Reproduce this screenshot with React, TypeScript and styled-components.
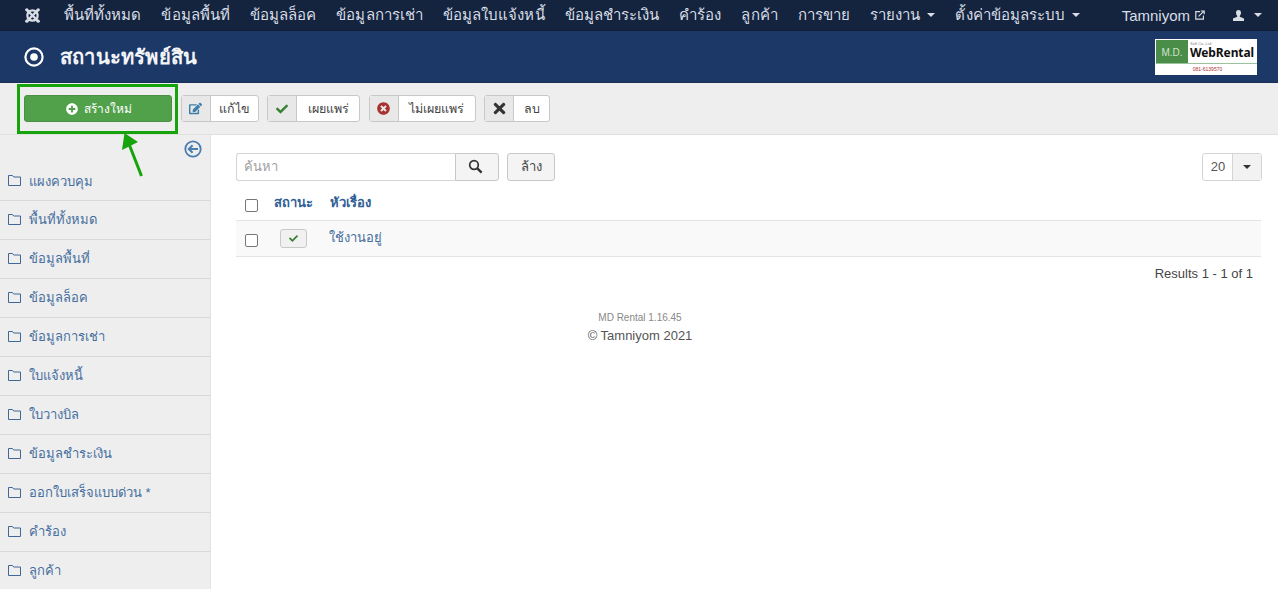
import React from "react";
import styled, { createGlobalStyle } from "styled-components";
import { FaCheck, FaEdit, FaPlusCircle, FaTimes, FaTimesCircle } from "react-icons/fa";

const GlobalStyle = createGlobalStyle`
  html, body {
    margin: 0;
    padding: 0;
    background: #fff;
    font-family: "Liberation Sans", "Noto Sans", sans-serif;
    font-size: 13px;
    color: #333;
    overflow: hidden;
  }
`;

const Page = styled.div`
  position: relative;
  width: 1278px;
  height: 589px;
  overflow: hidden;
`;

const TopNav = styled.nav`
  height: 30px;
  background: #14243f;
  border-bottom: 1px solid #0f1c33;
  display: flex;
  align-items: center;
  padding: 0 16px 0 24px;
`;

const Brand = styled.div`
  width: 40px;
  display: flex;
  color: #d9dde4;
`;

const NavItems = styled.div`
  display: flex;
  gap: 20px;
`;

const NavItem = styled.a`
  display: inline-flex;
  align-items: center;
  gap: 7px;
  color: #d9dde4;
  font-size: 15px;
  letter-spacing: 0.06px;
  white-space: nowrap;
`;

const Caret = styled.span`
  width: 0;
  height: 0;
  border-left: 4px solid transparent;
  border-right: 4px solid transparent;
  border-top: 4px solid currentColor;
`;

const NavRight = styled.div`
  margin-left: auto;
  display: flex;
  align-items: center;
  gap: 28px;
`;

const UserLink = styled(NavItem)`
  gap: 5px;
  letter-spacing: 0;
`;

const UserMenu = styled(NavItem)`
  gap: 10px;
`;

const SubHead = styled.header`
  height: 51px;
  background: #1c3867;
  border-bottom: 1px solid #183058;
  display: flex;
  align-items: center;
  justify-content: space-between;
  padding: 0 21px 0 24px;
`;

const PageTitle = styled.h1`
  display: flex;
  align-items: center;
  gap: 16px;
  margin: 0;
  color: #f2f4f7;
  font-size: 20.2px;
  letter-spacing: 0.2px;
  font-weight: 700;
`;

const Logo = styled.div`
  width: 102px;
  height: 36px;
  box-sizing: border-box;
  padding: 1px 0 0 1px;
  background: #fff;
  display: flex;
  flex-direction: column;
`;

const LogoTop = styled.div`
  height: 23px;
  display: flex;
  border-bottom: 1px solid #9ac29d;
`;

const LogoMark = styled.div`
  width: 32px;
  box-sizing: border-box;
  padding-top: 2px;
  background: #4a8d48;
  color: #cfe3cf;
  font-size: 10px;
  display: flex;
  align-items: center;
  justify-content: center;
`;

const LogoText = styled.div`
  flex: 1;
  display: flex;
  flex-direction: column;
  padding-left: 2px;
`;

const LogoCompany = styled.div`
  color: #888;
  font-size: 4px;
  line-height: 5px;
  margin-top: 1px;
`;

const LogoName = styled.div`
  color: #111;
  font-family: "Noto Sans", sans-serif;
  font-weight: 700;
  font-size: 12px;
  line-height: 13px;
  letter-spacing: -0.1px;
`;

const LogoPhone = styled.div`
  flex: 1;
  color: #a33;
  font-size: 5px;
  display: flex;
  align-items: center;
  justify-content: center;
  padding-left: 2px;
`;

const Toolbar = styled.div`
  height: 52px;
  box-sizing: border-box;
  background: #eeeeee;
  border-bottom: 1px solid #e0e0e0;
  display: flex;
  align-items: center;
  gap: 8.5px;
  padding: 0 0 0 24px;
`;

const NewButton = styled.button`
  width: 148px;
  height: 27px;
  background: #51a04a;
  border: 1px solid #4a8f44;
  border-radius: 3px;
  color: #fff;
  font: inherit;
  font-size: 12px;
  display: flex;
  align-items: center;
  justify-content: center;
  gap: 6px;
  padding: 0 0 0 2px;
`;

const ToolButton = styled.button`
  height: 27px;
  padding: 0;
  background: #fff;
  border: 1px solid #c8c8c8;
  border-radius: 3px;
  color: #444;
  font: inherit;
  font-size: 12.5px;
  display: flex;
  align-items: stretch;
`;

const ToolIcon = styled.span<{ $color: string }>`
  width: 28px;
  background: #e8e8e8;
  border-right: 1px solid #c8c8c8;
  color: ${(p) => p.$color};
  display: flex;
  align-items: center;
  justify-content: center;
`;

const ToolLabel = styled.span<{ $pad: number }>`
  padding: 0 ${(p) => p.$pad}px;
  display: flex;
  align-items: center;
`;

const Highlight = styled.div`
  position: absolute;
  left: 17px;
  top: 84px;
  width: 161px;
  height: 50px;
  box-sizing: border-box;
  border: 3px solid #16a30c;
  pointer-events: none;
`;

const Arrow = styled.svg`
  position: absolute;
  left: 118px;
  top: 130px;
`;

const Body = styled.div`
  display: flex;
  height: 454px;
`;

const Sidebar = styled.aside`
  width: 211px;
  box-sizing: border-box;
  flex: none;
  background: #eeeeee;
  border-right: 1px solid #e3e3e3;
  display: flex;
  flex-direction: column;
  overflow: hidden;
`;

const ToggleRow = styled.div`
  height: 28px;
  flex: none;
  box-sizing: border-box;
  padding: 5px 8px 0 0;
  display: flex;
  justify-content: flex-end;
  color: #4a7db0;
`;

const SideItem = styled.a`
  height: 39px;
  flex: none;
  box-sizing: border-box;
  border-bottom: 1px solid #d8d8d8;
  display: flex;
  align-items: center;
  gap: 8px;
  padding: 0 0 1px 8px;
  color: #466e9e;
  font-size: 13px;
  &:first-of-type {
    height: 38px;
  }
`;

const FolderIcon = styled.svg`
  flex: none;
  margin-top: -2px;
  color: #3f6797;
`;

const Main = styled.main`
  flex: 1;
  padding: 18px 16px 0 25px;
  min-width: 0;
`;

const Filters = styled.div`
  display: flex;
  align-items: center;
  height: 28px;
`;

const SearchInput = styled.div`
  width: 219px;
  height: 28px;
  box-sizing: border-box;
  border: 1px solid #d4d4d4;
  border-right: 0;
  border-radius: 3px 0 0 3px;
  color: #a0a0a0;
  padding: 0 7px 2px;
  display: flex;
  align-items: center;
`;

const SearchButton = styled.button`
  width: 44px;
  height: 28px;
  padding: 0 3px 2px 0;
  background: #f4f4f4;
  border: 1px solid #c8c8c8;
  border-radius: 0 3px 3px 0;
  color: #333;
  display: flex;
  align-items: center;
  justify-content: center;
`;

const ClearButton = styled.button`
  width: 48px;
  height: 28px;
  margin-left: 8px;
  padding: 0 0 2px;
  background: #f4f4f4;
  border: 1px solid #c8c8c8;
  border-radius: 3px;
  color: #444;
  font: inherit;
`;

const LimitSelect = styled.div`
  margin-left: auto;
  width: 60px;
  height: 28px;
  box-sizing: border-box;
  border: 1px solid #d4d4d4;
  border-radius: 3px;
  display: flex;
  color: #555;
`;

const LimitValue = styled.span`
  flex: 1;
  padding: 0 0 2px 1px;
  display: flex;
  align-items: center;
  justify-content: center;
`;

const LimitCaret = styled.span`
  width: 28px;
  background: #f2f2f2;
  border-left: 1px solid #d4d4d4;
  color: #333;
  display: flex;
  align-items: center;
  justify-content: center;
`;

const Table = styled.div`
  margin: 4px 1px 0 0;
`;

const Row = styled.div<{ $head?: boolean }>`
  display: grid;
  grid-template-columns: 38px 56px 1fr;
  align-items: center;
  height: 36px;
  box-sizing: border-box;
  border-bottom: 1px solid #e4e4e4;
  background: ${(p) => (p.$head ? "#fff" : "#f9f9f9")};
  color: #466e9e;
`;

const Check = styled.input.attrs({ type: "checkbox" })<{ $offset: number }>`
  appearance: none;
  box-sizing: border-box;
  margin: ${(p) => p.$offset}px 0 0 9px;
  width: 13px;
  height: 13px;
  background: #fff;
  border: 1px solid #777;
  border-radius: 2px;
`;

const HeadLabel = styled.span`
  font-weight: 700;
  color: #2f6196;
`;

const RowTitle = styled.span`
  margin-left: -1px;
  padding-bottom: 2px;
`;

const StatusButton = styled.span`
  width: 27px;
  height: 19px;
  box-sizing: border-box;
  margin-left: 6px;
  background: #f1f1f1;
  border: 1px solid #c8c8c8;
  border-radius: 3px;
  color: #378137;
  display: flex;
  align-items: center;
  justify-content: center;
`;

const Results = styled.div`
  text-align: right;
  margin: 9px 9px 0 0;
  color: #444;
`;

const Footer = styled.footer`
  margin-top: 31px;
  width: 808px;
  text-align: center;
  color: #555;
`;

const Version = styled.div`
  font-size: 10px;
  color: #888;
  margin-bottom: 5px;
`;

const JoomlaMark = () => (
  <svg width="17" height="17" viewBox="0 0 18 18" fill="none" stroke="currentColor" strokeWidth="2.4">
    <path d="M3 3 L15 15 M15 3 L3 15 M5 5 Q9 2 13 5 M5 13 Q9 16 13 13 M5 5 Q2 9 5 13 M13 5 Q16 9 13 13" />
    <circle cx="3" cy="3" r="1.8" fill="currentColor" stroke="none" />
    <circle cx="15" cy="3" r="1.8" fill="currentColor" stroke="none" />
    <circle cx="3" cy="15" r="1.8" fill="currentColor" stroke="none" />
    <circle cx="15" cy="15" r="1.8" fill="currentColor" stroke="none" />
  </svg>
);

const TitleIcon = () => (
  <svg width="20" height="20" viewBox="0 0 20 20">
    <circle cx="10" cy="10" r="8.6" fill="none" stroke="#fff" strokeWidth="2.2" />
    <circle cx="10" cy="10" r="3.8" fill="#fff" />
  </svg>
);

const OutIcon = () => (
  <svg width="10" height="10" viewBox="0 0 10 10" fill="none" stroke="currentColor" strokeWidth="1.2">
    <path d="M5 1.6 H0.8 V9.2 H8.4 V5.4" />
    <path d="M3.6 6.4 L8.6 1.4 M5.8 1 H9.2 V4.2" />
  </svg>
);

const UserIcon = () => (
  <svg width="11" height="11" viewBox="0 0 11 11" fill="currentColor">
    <path d="M5.5 0 C7.2 0 8 1.2 8 2.8 C8 4.2 7.4 5.2 6.8 5.8 V6.8 L11 8.6 V11 H0 V8.6 L4.2 6.8 V5.8 C3.6 5.2 3 4.2 3 2.8 C3 1.2 3.8 0 5.5 0 Z" />
  </svg>
);

const SearchGlyph = () => (
  <svg width="15" height="15" viewBox="0 0 15 15" fill="none" stroke="currentColor">
    <circle cx="6" cy="6" r="4.3" strokeWidth="1.7" />
    <path d="M9.3 9.3 L13.6 13.6" strokeWidth="2.4" />
  </svg>
);

const BackIcon = () => (
  <svg width="18" height="18" viewBox="0 0 18 18" fill="none" stroke="currentColor">
    <circle cx="9" cy="9" r="7.7" strokeWidth="1.8" />
    <path d="M14 9 H5.5 M8.6 5.2 L4.8 9 L8.6 12.8" strokeWidth="2" />
  </svg>
);

const Folder = () => (
  <FolderIcon width="13" height="12" viewBox="0 0 13 12" fill="none" stroke="currentColor" strokeWidth="1">
    <path d="M0.5 1.5 H4.5 L5.7 3 H12.5 V11.5 H0.5 Z" />
  </FolderIcon>
);

const navItems = [
  "พื้นที่ทั้งหมด",
  "ข้อมูลพื้นที่",
  "ข้อมูลล็อค",
  "ข้อมูลการเช่า",
  "ข้อมูลใบแจ้งหนี้",
  "ข้อมูลชำระเงิน",
  "คำร้อง",
  "ลูกค้า",
  "การขาย",
];

const sideItems = [
  "แผงควบคุม",
  "พื้นที่ทั้งหมด",
  "ข้อมูลพื้นที่",
  "ข้อมูลล็อค",
  "ข้อมูลการเช่า",
  "ใบแจ้งหนี้",
  "ใบวางบิล",
  "ข้อมูลชำระเงิน",
  "ออกใบเสร็จแบบด่วน *",
  "คำร้อง",
  "ลูกค้า",
];

export default function App() {
  return (
    <Page>
      <GlobalStyle />
      <TopNav>
        <Brand>
          <JoomlaMark />
        </Brand>
        <NavItems>
          {navItems.map((item) => (
            <NavItem key={item}>{item}</NavItem>
          ))}
          <NavItem>
            รายงาน <Caret />
          </NavItem>
          <NavItem>
            ตั้งค่าข้อมูลระบบ <Caret />
          </NavItem>
        </NavItems>
        <NavRight>
          <UserLink>
            Tamniyom <OutIcon />
          </UserLink>
          <UserMenu>
            <UserIcon /> <Caret />
          </UserMenu>
        </NavRight>
      </TopNav>
      <SubHead>
        <PageTitle>
          <TitleIcon />
          สถานะทรัพย์สิน
        </PageTitle>
        <Logo>
          <LogoTop>
            <LogoMark>M.D.</LogoMark>
            <LogoText>
              <LogoCompany>Soft Co.,Ltd.</LogoCompany>
              <LogoName>WebRental</LogoName>
            </LogoText>
          </LogoTop>
          <LogoPhone>081-6139570</LogoPhone>
        </Logo>
      </SubHead>
      <Toolbar>
        <NewButton>
          <FaPlusCircle size={12} />
          สร้างใหม่
        </NewButton>
        <ToolButton>
          <ToolIcon $color="#3d7fa8"><FaEdit size={13} /></ToolIcon>
          <ToolLabel $pad={8}>แก้ไข</ToolLabel>
        </ToolButton>
        <ToolButton>
          <ToolIcon $color="#378137"><FaCheck size={12} /></ToolIcon>
          <ToolLabel $pad={10.5}>เผยแพร่</ToolLabel>
        </ToolButton>
        <ToolButton>
          <ToolIcon $color="#a83232"><FaTimesCircle size={13} /></ToolIcon>
          <ToolLabel $pad={10.5}>ไม่เผยแพร่</ToolLabel>
        </ToolButton>
        <ToolButton>
          <ToolIcon $color="#333"><FaTimes size={17} /></ToolIcon>
          <ToolLabel $pad={9.5}>ลบ</ToolLabel>
        </ToolButton>
      </Toolbar>
      <Highlight />
      <Arrow width="28" height="50" viewBox="0 0 28 50">
        <path d="M6.5 3 L20 12 L4 20 Z" fill="#16a30c" />
        <path d="M11 14 L23.5 46" stroke="#16a30c" strokeWidth="3" />
      </Arrow>
      <Body>
        <Sidebar>
          <ToggleRow>
            <BackIcon />
          </ToggleRow>
          {sideItems.map((item) => (
            <SideItem key={item}>
              <Folder />
              {item}
            </SideItem>
          ))}
        </Sidebar>
        <Main>
          <Filters>
            <SearchInput>ค้นหา</SearchInput>
            <SearchButton><SearchGlyph /></SearchButton>
            <ClearButton>ล้าง</ClearButton>
            <LimitSelect>
              <LimitValue>20</LimitValue>
              <LimitCaret><Caret /></LimitCaret>
            </LimitSelect>
          </Filters>
          <Table>
            <Row $head>
              <Check $offset={6} />
              <HeadLabel>สถานะ</HeadLabel>
              <HeadLabel>หัวเรื่อง</HeadLabel>
            </Row>
            <Row>
              <Check $offset={4} />
              <StatusButton><FaCheck size={9} /></StatusButton>
              <RowTitle>ใช้งานอยู่</RowTitle>
            </Row>
          </Table>
          <Results>Results 1 - 1 of 1</Results>
          <Footer>
            <Version>MD Rental 1.16.45</Version>
            <div>© Tamniyom 2021</div>
          </Footer>
        </Main>
      </Body>
    </Page>
  );
}
